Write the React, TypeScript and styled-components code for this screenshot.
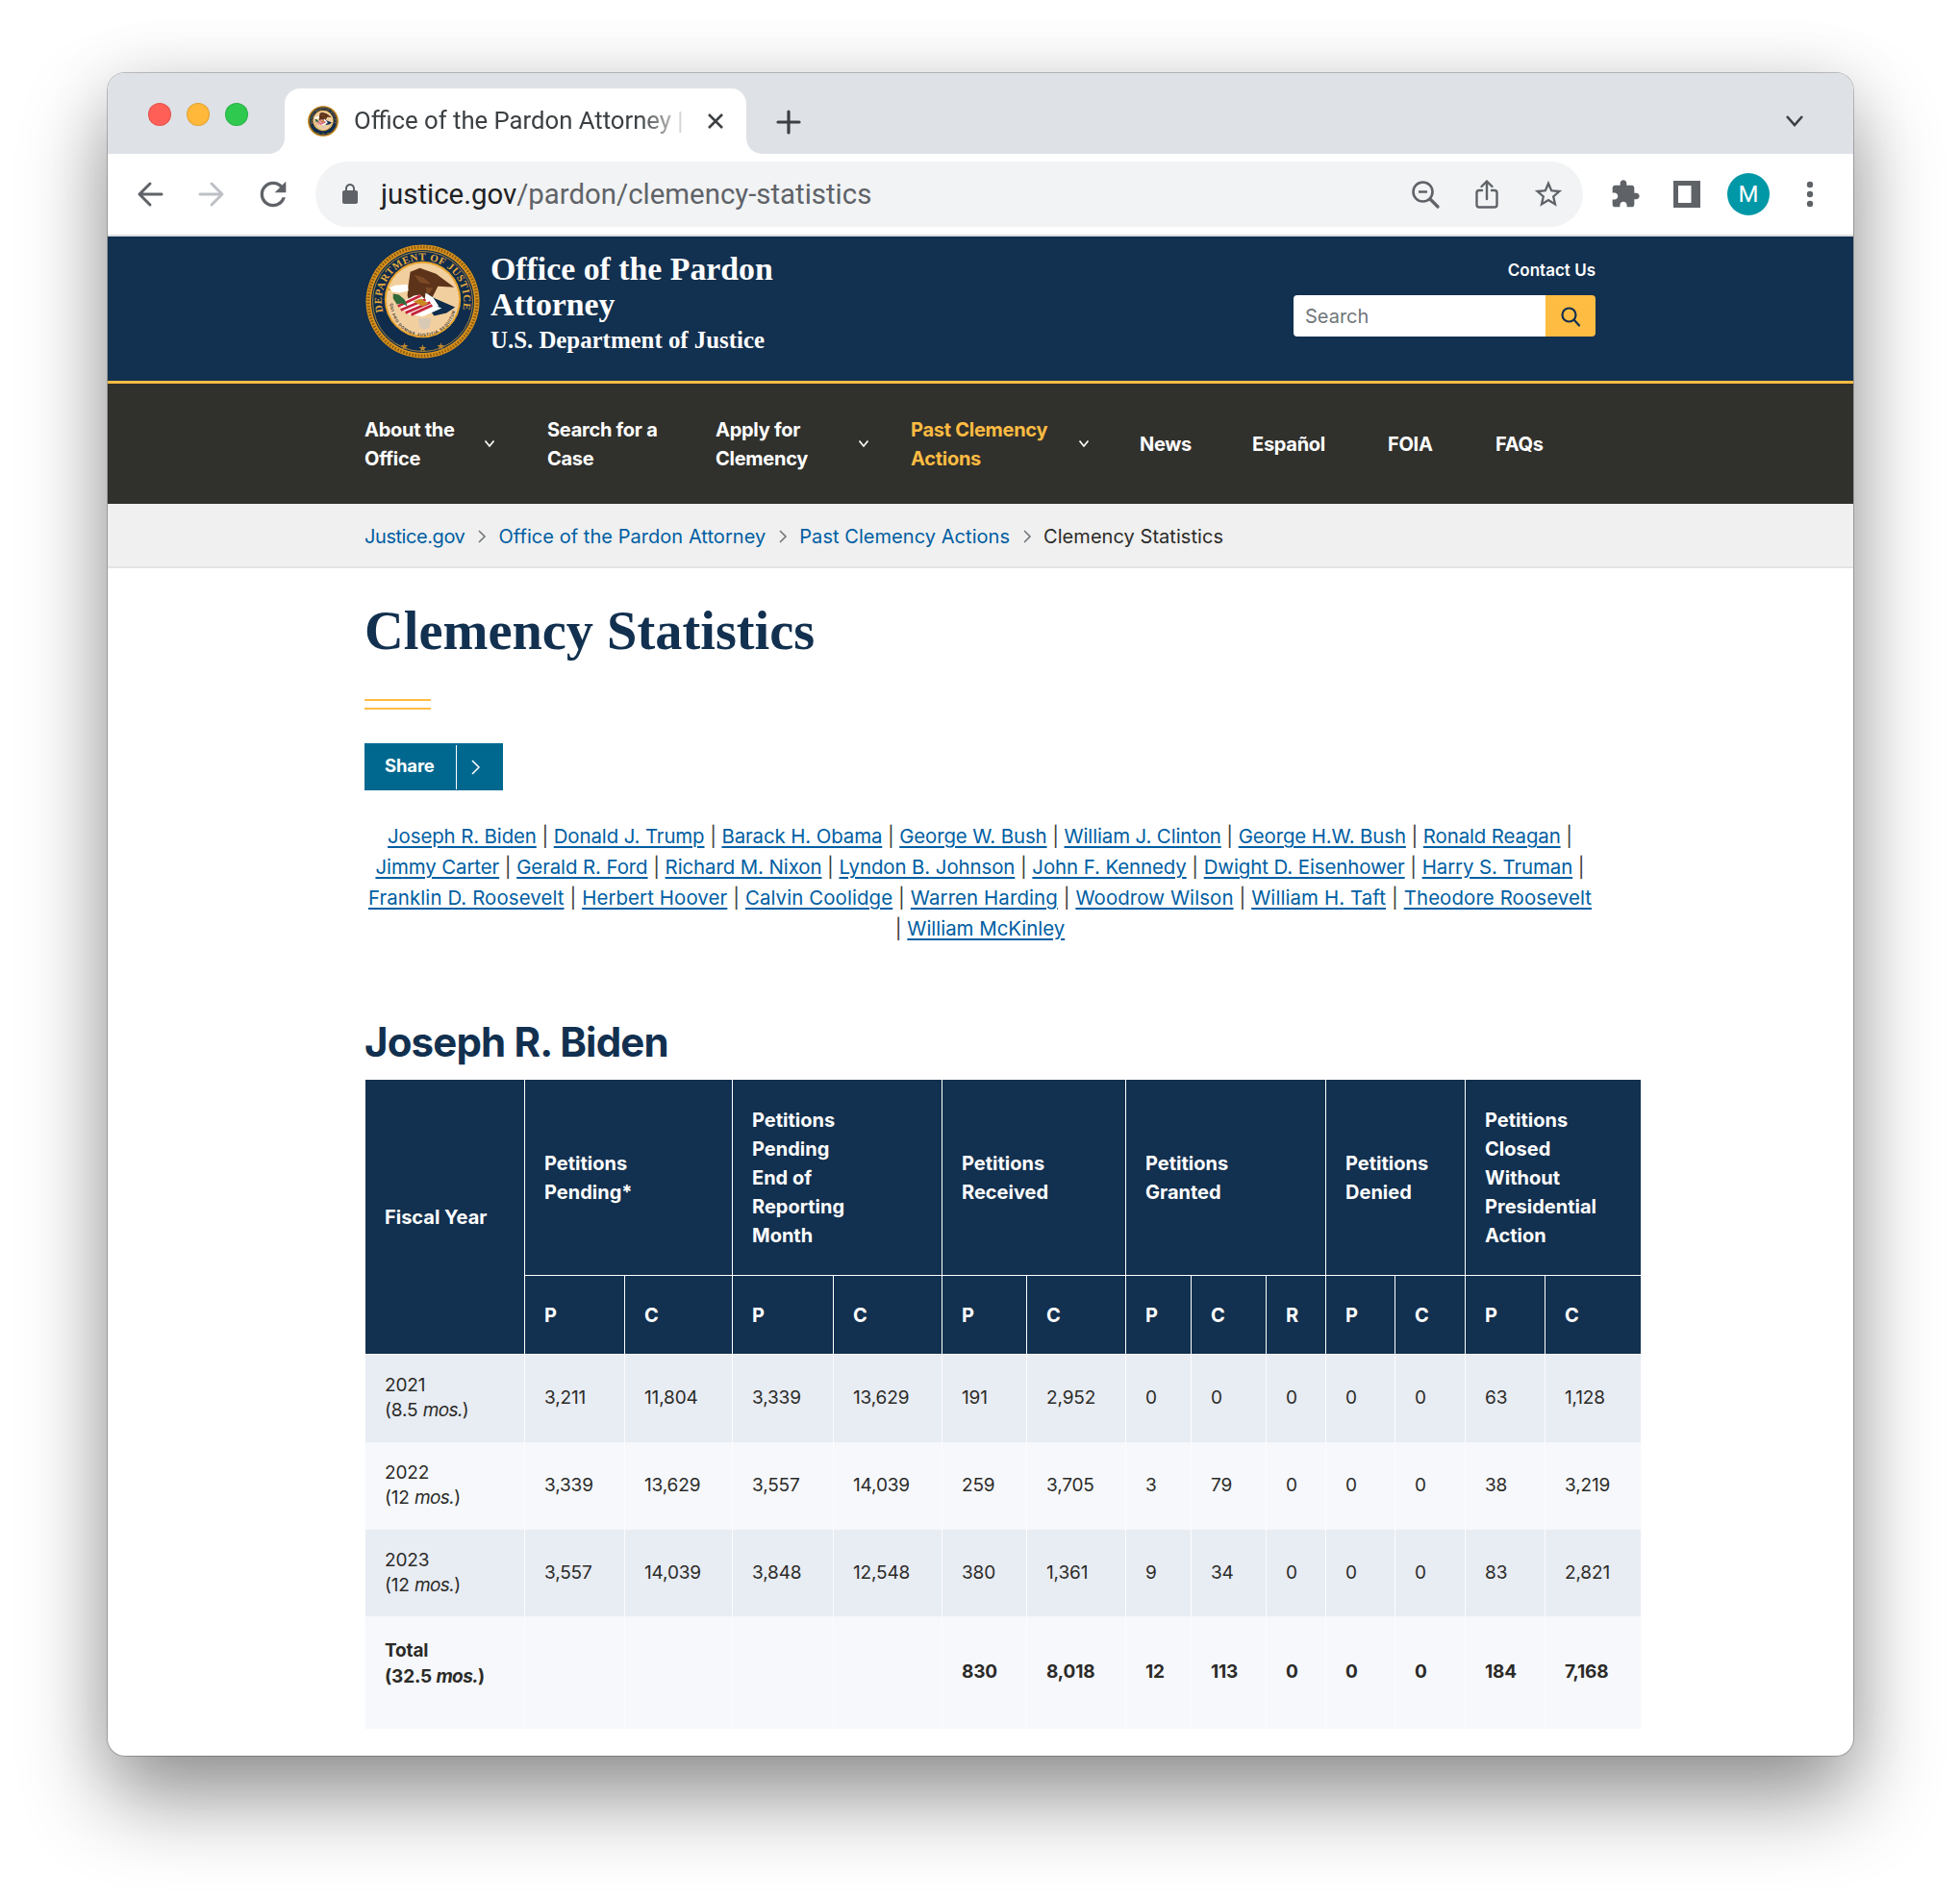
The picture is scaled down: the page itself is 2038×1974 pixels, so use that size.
import React from 'react'
import styled, { createGlobalStyle } from 'styled-components'

const navy = '#12304f'
const gold = '#ffbc42'
const link = '#005ea2'
const chrome = '#5f6368'

const GlobalStyle = createGlobalStyle`
  html, body { margin: 0; padding: 0; background: #fff; }
  body { font-family: Inter, "Liberation Sans", sans-serif; }
  * { box-sizing: border-box; }
`

const Page = styled.div`
  width: 2038px;
  height: 1974px;
  padding: 76px 0 0 112px;
  overflow: hidden;
`

const Window = styled.div`
  width: 1815px;
  height: 1750px;
  border-radius: 18px;
  background: #fff;
  overflow: hidden;
  box-shadow: 0 0 0 1px rgba(0,0,0,.22), 0 44px 88px rgba(0,0,0,.42), 0 0 70px rgba(0,0,0,.08);
`

/* browser chrome */
const TabStrip = styled.div`
  height: 84px;
  background: #dee1e6;
  display: flex;
  align-items: flex-end;
  padding-left: 42px;
`

const Lights = styled.div`
  display: flex;
  gap: 16px;
  align-self: flex-start;
  margin-top: 31px;
  width: 142px;
`

const Light = styled.span<{ $c: string }>`
  width: 24px;
  height: 24px;
  border-radius: 50%;
  background: ${p => p.$c};
  box-shadow: inset 0 0 0 1px rgba(0,0,0,.12);
`

const Tab = styled.div`
  position: relative;
  width: 480px;
  height: 68px;
  background: #fff;
  border-radius: 16px 16px 0 0;
  display: flex;
  align-items: center;
  padding-left: 24px;
  &::before, &::after {
    content: '';
    position: absolute;
    bottom: 0;
    width: 16px;
    height: 16px;
  }
  &::before { left: -16px; background: radial-gradient(circle at 0 0, #dee1e6 15.5px, #fff 16px); }
  &::after { right: -16px; background: radial-gradient(circle at 100% 0, #dee1e6 15.5px, #fff 16px); }
`

const TabTitle = styled.span`
  font: 400 25.7px/30px Roboto, sans-serif;
  color: #3c4043;
  margin: -2px 0 0 16px;
  width: 344px;
  white-space: nowrap;
  -webkit-mask-image: linear-gradient(90deg, #000 86%, rgba(0,0,0,.15) 100%);
  mask-image: linear-gradient(90deg, #000 86%, rgba(0,0,0,.15) 100%);
`

const TabClose = styled.svg`
  width: 20px;
  height: 20px;
  margin-left: 22px;
`

const NewTab = styled.svg`
  width: 28px;
  height: 28px;
  margin: 0 0 19px 30px;
`

const TabMenu = styled.svg`
  width: 22px;
  height: 14px;
  margin: 0 50px 27px auto;
`

const Toolbar = styled.div`
  height: 86px;
  border-bottom: 2px solid #dadce0;
  background: #fff;
  display: flex;
  align-items: center;
  padding: 0 13px 0 12px;
`

const Slot = styled.div`
  width: 64px;
  height: 64px;
  flex: none;
  display: flex;
  align-items: center;
  justify-content: center;
  color: ${chrome};
`

const Omnibox = styled.div`
  width: 1318px;
  height: 68px;
  margin: 0 12px;
  border-radius: 34px;
  background: #f1f3f4;
  display: flex;
  align-items: center;
  padding: 0 4px 0 24px;
`

const Url = styled.div`
  flex: 1;
  margin-left: 20px;
  font: 400 29.4px Roboto, sans-serif;
  color: ${chrome};
  white-space: nowrap;
  b { font-weight: 400; color: #202124; }
`

const Avatar = styled.div`
  width: 44px;
  height: 44px;
  border-radius: 50%;
  background: #0097a7;
  color: #fff;
  font: 400 24px Roboto, sans-serif;
  display: flex;
  align-items: center;
  justify-content: center;
`

/* site header */
const SiteHeader = styled.header`
  height: 153px;
  background: ${navy};
  border-bottom: 3px solid ${gold};
  display: flex;
  justify-content: space-between;
  padding: 8px 268px 0 268px;
`

const Brand = styled.div`
  display: flex;
  gap: 11px;
  color: #fff;
  font-family: "Liberation Serif", serif;
  font-weight: 700;
`

const BrandText = styled.div`
  padding-top: 7px;
`

const BrandTitle = styled.div`
  font-size: 33.8px;
  line-height: 37px;
  width: 320px;
`

const BrandSub = styled.div`
  font-size: 24.85px;
  line-height: 30px;
  margin-top: 4px;
`

const HeaderTools = styled.div`
  display: flex;
  flex-direction: column;
  align-items: flex-end;
  padding-top: 17px;
`

const ContactLink = styled.a`
  color: #fff;
  font-size: 17px;
  font-weight: 600;
  line-height: 20px;
`

const SearchBox = styled.div`
  display: flex;
  width: 314px;
  height: 43px;
  margin-top: 16px;
  border-radius: 4px;
  overflow: hidden;
`

const SearchField = styled.div`
  flex: 1;
  background: #fff;
  color: #71767a;
  font-size: 20px;
  line-height: 45px;
  padding-left: 12px;
`

const SearchButton = styled.div`
  width: 52px;
  background: ${gold};
  display: flex;
  align-items: center;
  justify-content: center;
`

/* main nav */
const NavBar = styled.nav`
  height: 125px;
  background: #30302c;
  display: flex;
  align-items: center;
  padding-left: 267px;
`

const NavItem = styled.a<{ $w: number; $active?: boolean }>`
  width: ${p => p.$w}px;
  flex: none;
  display: flex;
  align-items: center;
  color: ${p => (p.$active ? gold : '#fff')};
  font-size: 20px;
  font-weight: 700;
  line-height: 30px;
  letter-spacing: -0.27px;
`

const NavLabel = styled.span<{ $w?: number }>`
  width: ${p => (p.$w ? `${p.$w}px` : 'auto')};
  white-space: nowrap;
`

/* breadcrumb */
const Crumbs = styled.div`
  height: 67px;
  background: #f0f0f0;
  border-bottom: 2px solid #e3e3e3;
  display: flex;
  align-items: center;
  padding: 3px 0 0 267px;
  font-size: 20px;
  letter-spacing: 0.05px;
  color: #2b2b28;
`

const CrumbLink = styled.a<{ $tight?: boolean }>`
  color: ${link};
  letter-spacing: ${p => (p.$tight ? '-0.43px' : 'inherit')};
`

const CrumbSep = styled.svg`
  width: 10px;
  height: 16px;
  margin: 0 12.5px;
`

/* page content */
const Main = styled.main`
  padding: 34px 222px 0 267px;
`

const Title = styled.h1`
  margin: 0;
  font-family: "Liberation Serif", serif;
  font-size: 56.4px;
  line-height: 62px;
  font-weight: 700;
  color: ${navy};
`

const DoubleRule = styled.div`
  width: 69px;
  height: 11px;
  margin-top: 40px;
  border-top: 2px solid ${gold};
  border-bottom: 2px solid ${gold};
`

const ShareButton = styled.div`
  width: 144px;
  height: 49px;
  margin-top: 35px;
  background: #00688f;
  color: #fff;
  display: flex;
  align-items: center;
  font-size: 18.5px;
  font-weight: 700;
  letter-spacing: -0.15px;
`

const ShareLabel = styled.span`
  width: 96px;
  height: 46px;
  padding-left: 21px;
  line-height: 43px;
  border-right: 1px solid #fff;
`

const ShareChevron = styled.svg`
  width: 12px;
  height: 18px;
  margin-left: 14px;
`

const PresidentLinks = styled.div`
  width: 1280px;
  margin-top: 32px;
  font-size: 20.4px;
  line-height: 32px;
  color: #3d3d3a;
  text-align: center;
  white-space: nowrap;
  a { color: ${link}; text-decoration: underline; text-decoration-thickness: 1.5px; text-underline-offset: 3px; }
`

const LinkLine = styled.div<{ $ls: number }>`
  letter-spacing: ${p => p.$ls}px;
`

const SectionTitle = styled.h2`
  margin: 77px 0 0;
  font-size: 42px;
  line-height: 50px;
  font-weight: 700;
  letter-spacing: -0.85px;
  color: ${navy};
`

const StatsTable = styled.table`
  width: 1327px;
  margin-top: 13px;
  border-collapse: collapse;
  table-layout: fixed;
  color: #2b2b28;
  font-size: 19px;
  letter-spacing: -0.15px;
`

const HeadCell = styled.th<{ $short?: boolean }>`
  background: ${navy};
  color: #fff;
  border: 1px solid #fff;
  padding: 0 0 0 20px;
  height: ${p => (p.$short ? 82 : 204)}px;
  text-align: left;
  vertical-align: middle;
  font-size: 20px;
  line-height: 30px;
  font-weight: 700;
  letter-spacing: 0;
`

const Row = styled.tr<{ $shade: boolean; $h: number }>`
  height: ${p => p.$h}px;
  background: ${p => (p.$shade ? '#e8ecf3' : '#f6f8fc')};
`

const Cell = styled.td`
  padding: 0 0 0 20px;
  border: 1px solid #fbfcfe;
  border-top: 0;
  border-bottom: 0;
  line-height: 26px;
  white-space: nowrap;
  em { font-style: italic; letter-spacing: -0.6px; }
`

const TotalCell = styled(Cell)`
  font-weight: 700;
`

const TotalLabel = styled.div`
  line-height: 27px;
  padding-bottom: 18px;
`

/* seal: real text on curves, eagle as a small drawing */
const Seal: React.FC<{ id: string; size: number }> = ({ id, size }) => (
  <svg width={size} height={size} viewBox="0 0 120 120" style={{ flex: 'none' }}>
    <circle cx="60" cy="60" r="59.500" fill="#d9921c" />
    <circle cx="60" cy="60" r="57" fill="none" stroke="#8a5a12" strokeWidth="3" strokeDasharray="1.600 1.600" />
    <circle cx="60" cy="60" r="54" fill="#0f2c4c" />
    <circle cx="60" cy="60" r="52.500" fill="none" stroke="#e5a93a" strokeWidth=".7" />
    <path id={`${id}-top`} d="M18.500 71A43 43 0 1 1 101.500 71" fill="none" />
    <text fontFamily="Liberation Serif, serif" fontSize="11" fill="#e5a93a" textLength="155" lengthAdjust="spacing">
      <textPath href={`#${id}-top`}>DEPARTMENT OF JUSTICE</textPath>
    </text>
    <circle cx="60" cy="58" r="40" fill="#e8a52f" />
    <circle cx="60" cy="58" r="38" fill="#f1cf9f" />
    <path id={`${id}-low`} d="M26 62a34.500 34.500 0 0 0 69 0" fill="none" />
    <text fontFamily="Liberation Sans, sans-serif" fontSize="4.200" fill="#3a3226" textLength="100" lengthAdjust="spacing">
      <textPath href={`#${id}-low`}>QUI PRO DOMINA JUSTITIA SEQUITUR</textPath>
    </text>
    <path d="M45 43l2-14 10-4 17 6 19 14-17-1-6 12-9 9-14-2-3-9z" fill="#5d3319" />
    <path d="M51 32l10 3 8 7-12-2zM63 45l8 1-6 8z" fill="#7c4a26" />
    <path d="M25 46l6-3 13-1 1 7-9 2-8-1-2-2z" fill="#fff" />
    <path d="M25 46l-2 2 4 1z" fill="#d9a020" />
    <path d="M63 51l10 6 21 9-9 6-13 3-9-12z" fill="#0f2c4c" />
    <path d="M63 51l8 5 6 9-8 1-7-6z" fill="#fff" />
    <path d="M34 63l17-9 6-1 12 10 11 4-20 9-16-3z" fill="#fff" />
    <path d="M34 65l24-11M37 69l26-11M42 72l26-11M48 74l22-10" stroke="#c4263a" strokeWidth="2.800" fill="none" />
    <path d="M29 52l6 1 6 5 3 7-6-3-5 1-4-6z" fill="#2f6b3a" />
    <path d="M50 60l8-3 8 5-6 3z" fill="#c98a22" />
    <path d="M55 78h14l-2 9-5 3-5-3z" fill="#cfc7bd" opacity=".75" />
    <path d="M41 103l1 3 3 0-2.400 1.800.9 3-2.500-1.800-2.500 1.800.9-3-2.400-1.800 3 0zM60 105l1 3 3 0-2.400 1.800.9 3-2.500-1.800-2.500 1.800.9-3-2.400-1.800 3 0zM79 103l1 3 3 0-2.400 1.800.9 3-2.500-1.800-2.500 1.800.9-3-2.400-1.800 3 0z" fill="#b9852c" />
  </svg>
)

const NavChevron: React.FC = () => (
  <svg width="12" height="9" viewBox="0 0 12 9" style={{ flex: 'none' }}>
    <path d="M1.500 1.500 6 7l4.500-5.500" fill="none" stroke="#fff" strokeWidth="1.700" />
  </svg>
)

const Crumb: React.FC = () => (
  <CrumbSep viewBox="0 0 10 16">
    <path d="M2 2l6 6-6 6" fill="none" stroke="#71767a" strokeWidth="1.600" />
  </CrumbSep>
)

const linkLines = [
  { ls: -0.1, names: ['Joseph R. Biden', 'Donald J. Trump', 'Barack H. Obama', 'George W. Bush', 'William J. Clinton', 'George H.W. Bush', 'Ronald Reagan'] },
  { ls: -0.075, names: ['Jimmy Carter', 'Gerald R. Ford', 'Richard M. Nixon', 'Lyndon B. Johnson', 'John F. Kennedy', 'Dwight D. Eisenhower', 'Harry S. Truman'] },
  { ls: 0.11, names: ['Franklin D. Roosevelt', 'Herbert Hoover', 'Calvin Coolidge', 'Warren Harding', 'Woodrow Wilson', 'William H. Taft', 'Theodore Roosevelt'] },
]

const columns = [166, 104, 112, 105, 113, 88, 103, 68, 78, 62, 72, 73, 83, 100]

const groups: { label: React.ReactNode; subs: string[] }[] = [
  { label: <>Petitions<br />Pending*</>, subs: ['P', 'C'] },
  { label: <>Petitions<br />Pending<br />End of<br />Reporting<br />Month</>, subs: ['P', 'C'] },
  { label: <>Petitions<br />Received</>, subs: ['P', 'C'] },
  { label: <>Petitions<br />Granted</>, subs: ['P', 'C', 'R'] },
  { label: <>Petitions<br />Denied</>, subs: ['P', 'C'] },
  { label: <>Petitions<br />Closed<br />Without<br />Presidential<br />Action</>, subs: ['P', 'C'] },
]

const years = [
  { year: '2021', span: '8.5', cells: ['3,211', '11,804', '3,339', '13,629', '191', '2,952', '0', '0', '0', '0', '0', '63', '1,128'], h: 91 },
  { year: '2022', span: '12', cells: ['3,339', '13,629', '3,557', '14,039', '259', '3,705', '3', '79', '0', '0', '0', '38', '3,219'], h: 91 },
  { year: '2023', span: '12', cells: ['3,557', '14,039', '3,848', '12,548', '380', '1,361', '9', '34', '0', '0', '0', '83', '2,821'], h: 90 },
]

const totals = ['', '', '', '', '830', '8,018', '12', '113', '0', '0', '0', '184', '7,168']

export default function App() {
  return (
    <Page>
      <GlobalStyle />
      <Window>
        <TabStrip>
          <Lights>
            <Light $c="#ff5f57" />
            <Light $c="#ffb83a" />
            <Light $c="#2fc94f" />
          </Lights>
          <Tab>
            <Seal id="fav" size={32} />
            <TabTitle>Office of the Pardon Attorney |</TabTitle>
            <TabClose viewBox="0 0 20 20">
              <path d="M3 3l14 14M17 3 3 17" stroke="#3c4043" strokeWidth="2.600" />
            </TabClose>
          </Tab>
          <NewTab viewBox="0 0 28 28">
            <path d="M14 3v22M3 14h22" stroke="#3c4043" strokeWidth="3.200" strokeLinecap="round" />
          </NewTab>
          <TabMenu viewBox="0 0 22 14">
            <path d="M3 2l8 9 8-9" fill="none" stroke="#3c4043" strokeWidth="2.600" />
          </TabMenu>
        </TabStrip>

        <Toolbar>
          <Slot>
            <svg width="32" height="32" viewBox="0 0 32 32">
              <path d="M28 16H5M16 5 5 16l11 11" fill="none" stroke={chrome} strokeWidth="3" strokeLinecap="round" strokeLinejoin="round" />
            </svg>
          </Slot>
          <Slot>
            <svg width="32" height="32" viewBox="0 0 32 32">
              <path d="M4 16h23M16 5l11 11-11 11" fill="none" stroke="#bdc1c6" strokeWidth="3" strokeLinecap="round" strokeLinejoin="round" />
            </svg>
          </Slot>
          <Slot>
            <svg width="40" height="40" viewBox="0 0 24 24" fill={chrome}>
              <path d="M17.65 6.35C16.2 4.900 14.210 4 12 4c-4.420 0-7.990 3.580-7.990 8s3.570 8 7.990 8c3.730 0 6.840-2.550 7.730-6h-2.080c-.82 2.330-3.040 4-5.650 4-3.310 0-6-2.690-6-6s2.690-6 6-6c1.660 0 3.140.69 4.220 1.780L13 11h7V4l-2.350 2.350z" />
            </svg>
          </Slot>
          <Omnibox>
            <svg width="24" height="24" viewBox="0 0 24 24" fill={chrome} style={{ flex: 'none' }}>
              <path d="M18 8h-1V6c0-2.760-2.240-5-5-5S7 3.240 7 6v2H6c-1.100 0-2 .9-2 2v10c0 1.100.9 2 2 2h12c1.100 0 2-.9 2-2V10c0-1.100-.9-2-2-2zm-3 0H9V6c0-1.660 1.340-3 3-3s3 1.340 3 3v2z" />
            </svg>
            <Url><b>justice.gov</b>/pardon/clemency-statistics</Url>
            <Slot>
              <svg width="32" height="32" viewBox="0 0 32 32" fill="none" stroke={chrome}>
                <circle cx="13.500" cy="13.500" r="10" strokeWidth="2.600" />
                <path d="M21 21l8 8" strokeWidth="3.200" strokeLinecap="round" />
                <path d="M9 13.500h9" strokeWidth="2.400" />
              </svg>
            </Slot>
            <Slot>
              <svg width="32" height="32" viewBox="0 0 32 32" fill="none" stroke={chrome} strokeWidth="2.400" strokeLinecap="round" strokeLinejoin="round">
                <path d="M11 12H8a2.500 2.500 0 0 0-2.500 2.500V27A2.500 2.500 0 0 0 8 29.500h16a2.500 2.500 0 0 0 2.500-2.500V14.500A2.500 2.500 0 0 0 24 12h-3" />
                <path d="M16 21V2.500M10.500 8 16 2.500 21.500 8" />
              </svg>
            </Slot>
            <Slot>
              <svg width="34" height="34" viewBox="0 0 24 24" fill={chrome}>
                <path d="M22 9.240l-7.190-.62L12 2 9.190 8.630 2 9.240l5.460 4.730L5.820 21 12 17.270 18.180 21l-1.630-7.030L22 9.240zM12 15.400l-3.760 2.270 1-4.280-3.320-2.880 4.380-.38L12 6.100l1.710 4.040 4.380.38-3.320 2.880 1 4.280L12 15.400z" />
              </svg>
            </Slot>
          </Omnibox>
          <Slot>
            <svg width="32" height="32" viewBox="0 0 24 24" fill={chrome}>
              <path d="M20.500 11H19V7c0-1.100-.9-2-2-2h-4V3.500C13 2.120 11.880 1 10.500 1S8 2.120 8 3.500V5H4c-1.100 0-1.990.9-1.990 2v3.800H3.500c1.490 0 2.700 1.210 2.700 2.700s-1.210 2.700-2.700 2.700H2V20c0 1.100.9 2 2 2h3.800v-1.500c0-1.490 1.210-2.700 2.700-2.700 1.490 0 2.700 1.210 2.700 2.700V22H17c1.100 0 2-.9 2-2v-4h1.500c1.380 0 2.500-1.120 2.500-2.500S21.880 11 20.500 11z" />
            </svg>
          </Slot>
          <Slot>
            <svg width="28" height="28" viewBox="0 0 28 28">
              <path d="M0 0h28v28H0z" fill={chrome} />
              <path d="M5 5h13.500v18H5z" fill="#fff" />
            </svg>
          </Slot>
          <Slot><Avatar>M</Avatar></Slot>
          <Slot>
            <svg width="8" height="28" viewBox="0 0 8 28" fill={chrome}>
              <circle cx="4" cy="4" r="3.200" />
              <circle cx="4" cy="14" r="3.200" />
              <circle cx="4" cy="24" r="3.200" />
            </svg>
          </Slot>
        </Toolbar>

        <SiteHeader>
          <Brand>
            <Seal id="doj" size={119} />
            <BrandText>
              <BrandTitle>Office of the Pardon Attorney</BrandTitle>
              <BrandSub>U.S. Department of Justice</BrandSub>
            </BrandText>
          </Brand>
          <HeaderTools>
            <ContactLink>Contact Us</ContactLink>
            <SearchBox>
              <SearchField>Search</SearchField>
              <SearchButton>
                <svg width="24" height="24" viewBox="0 0 24 24" fill="none" stroke={navy} strokeWidth="2.200" strokeLinecap="round">
                  <circle cx="10.500" cy="10.500" r="7" />
                  <path d="M16 16l5 5.500" />
                </svg>
              </SearchButton>
            </SearchBox>
          </HeaderTools>
        </SiteHeader>

        <NavBar>
          <NavItem $w={190}><NavLabel $w={124}>About the<br />Office</NavLabel><NavChevron /></NavItem>
          <NavItem $w={175}><NavLabel>Search for a<br />Case</NavLabel></NavItem>
          <NavItem $w={203}><NavLabel $w={148}>Apply for<br />Clemency</NavLabel><NavChevron /></NavItem>
          <NavItem $w={238} $active><NavLabel $w={174}>Past Clemency<br />Actions</NavLabel><NavChevron /></NavItem>
          <NavItem $w={117}>News</NavItem>
          <NavItem $w={141}>Español</NavItem>
          <NavItem $w={112}>FOIA</NavItem>
          <NavItem $w={80}>FAQs</NavItem>
        </NavBar>

        <Crumbs>
          <CrumbLink $tight>Justice.gov</CrumbLink><Crumb />
          <CrumbLink>Office of the Pardon Attorney</CrumbLink><Crumb />
          <CrumbLink>Past Clemency Actions</CrumbLink><Crumb />
          <span>Clemency Statistics</span>
        </Crumbs>

        <Main>
          <Title>Clemency Statistics</Title>
          <DoubleRule />
          <ShareButton>
            <ShareLabel>Share</ShareLabel>
            <ShareChevron viewBox="0 0 12 18">
              <path d="M2 2l7 7-7 7" fill="none" stroke="#fff" strokeWidth="1.500" />
            </ShareChevron>
          </ShareButton>

          <PresidentLinks>
            {linkLines.map((line, i) => (
              <LinkLine key={i} $ls={line.ls}>
                {line.names.map((n, j) => (
                  <React.Fragment key={n}>
                    <a>{n}</a>{j < line.names.length - 1 || i < 2 ? ' | ' : ''}
                  </React.Fragment>
                ))}
              </LinkLine>
            ))}
            <LinkLine $ls={0}>| <a>William McKinley</a></LinkLine>
          </PresidentLinks>

          <SectionTitle>Joseph R. Biden</SectionTitle>
          <StatsTable>
            <colgroup>
              {columns.map((w, i) => <col key={i} width={w} />)}
            </colgroup>
            <thead>
              <tr>
                <HeadCell rowSpan={2}>Fiscal Year</HeadCell>
                {groups.map((g, i) => <HeadCell key={i} colSpan={g.subs.length}>{g.label}</HeadCell>)}
              </tr>
              <tr>
                {groups.flatMap((g, i) => g.subs.map((s, j) => <HeadCell key={`${i}${j}`} $short>{s}</HeadCell>))}
              </tr>
            </thead>
            <tbody>
              {years.map((y, i) => (
                <Row key={y.year} $shade={i % 2 === 0} $h={y.h}>
                  <Cell>{y.year}<br />({y.span} <em>mos.</em>)</Cell>
                  {y.cells.map((c, j) => <Cell key={j}>{c}</Cell>)}
                </Row>
              ))}
              <Row $shade={false} $h={117}>
                <TotalCell><TotalLabel>Total<br />(32.5 <em>mos.</em>)</TotalLabel></TotalCell>
                {totals.map((c, j) => <TotalCell key={j}>{c}</TotalCell>)}
              </Row>
            </tbody>
          </StatsTable>
        </Main>
      </Window>
    </Page>
  )
}
